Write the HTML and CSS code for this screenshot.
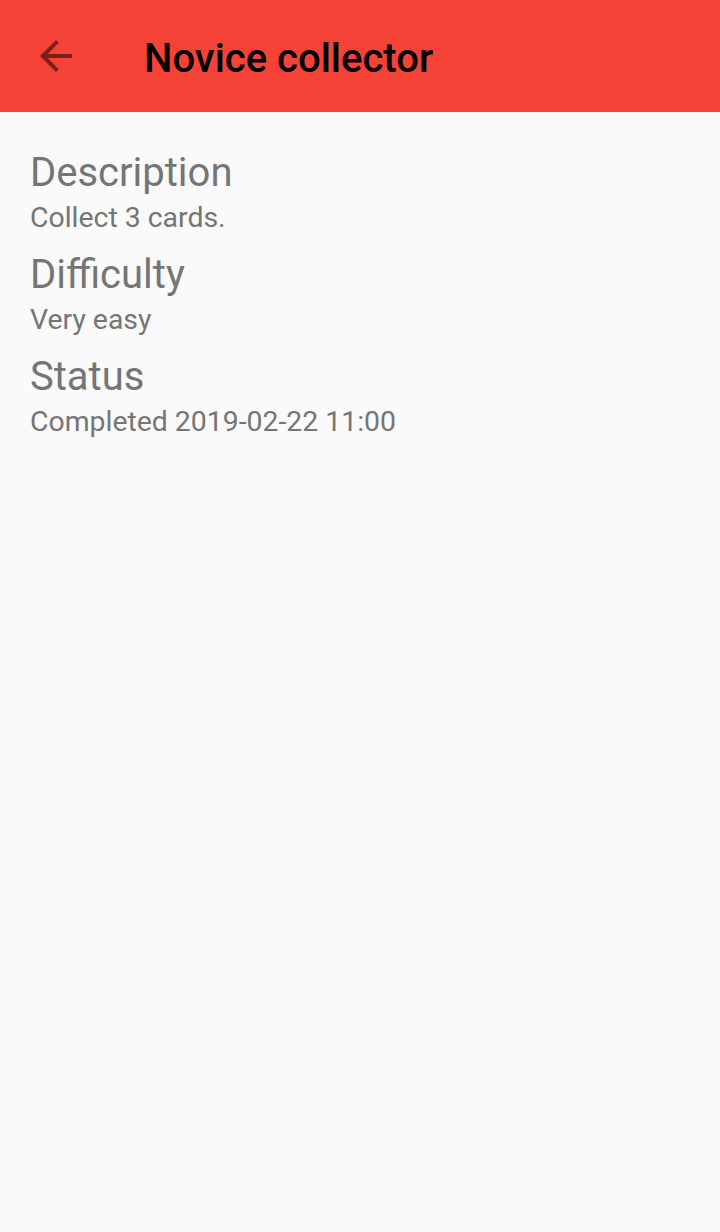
FILE: index.html
```html
<!DOCTYPE html>
<html>
<head>
<meta charset="utf-8">
<link rel="stylesheet" href="styles.css">
</head>
<body>
<header class="toolbar">
  <div class="nav-btn">
    <svg class="nav-icon" viewBox="0 0 24 24" width="48" height="48"><path d="M20 11H7.83l5.59-5.59L12 4l-8 8 8 8 1.41-1.41L7.83 13H20v-2z"/></svg>
  </div>
  <h1 class="title">Novice collector</h1>
</header>
<main class="content">
  <section class="field">
    <h2 class="label">Description</h2>
    <p class="value">Collect 3 cards.</p>
  </section>
  <section class="field">
    <h2 class="label">Difficulty</h2>
    <p class="value">Very easy</p>
  </section>
  <section class="field">
    <h2 class="label">Status</h2>
    <p class="value">Completed 2019-02-22 11:00</p>
  </section>
</main>
</body>
</html>
```
FILE: styles.css
```css
html, body {
  margin: 0;
  padding: 0;
  background: #fafafa;
  height: 100%;
}
body {
  font-family: Roboto, "Liberation Sans", sans-serif;
}
.toolbar {
  height: 112px;
  background: #f44336;
  display: flex;
  align-items: center;
}
.nav-btn {
  width: 48px;
  height: 48px;
  margin-left: 32px;
  display: flex;
}
.nav-icon {
  fill: rgba(0, 0, 0, 0.5);
}
.title {
  margin: 4px 0 0 64px;
  font-size: 40px;
  font-weight: 500;
  color: #000;
  line-height: normal;
}
.content {
  padding: 37px 30px 0 30px;
  display: flex;
  flex-direction: column;
  gap: 17px;
}
.field {
  display: flex;
  flex-direction: column;
  gap: 5px;
}
.label {
  margin: 0;
  font-size: 40px;
  font-weight: 400;
  line-height: 47px;
  color: #757575;
}
.value {
  margin: 0;
  font-size: 28.4px;
  line-height: 33px;
  color: #757575;
}
```
